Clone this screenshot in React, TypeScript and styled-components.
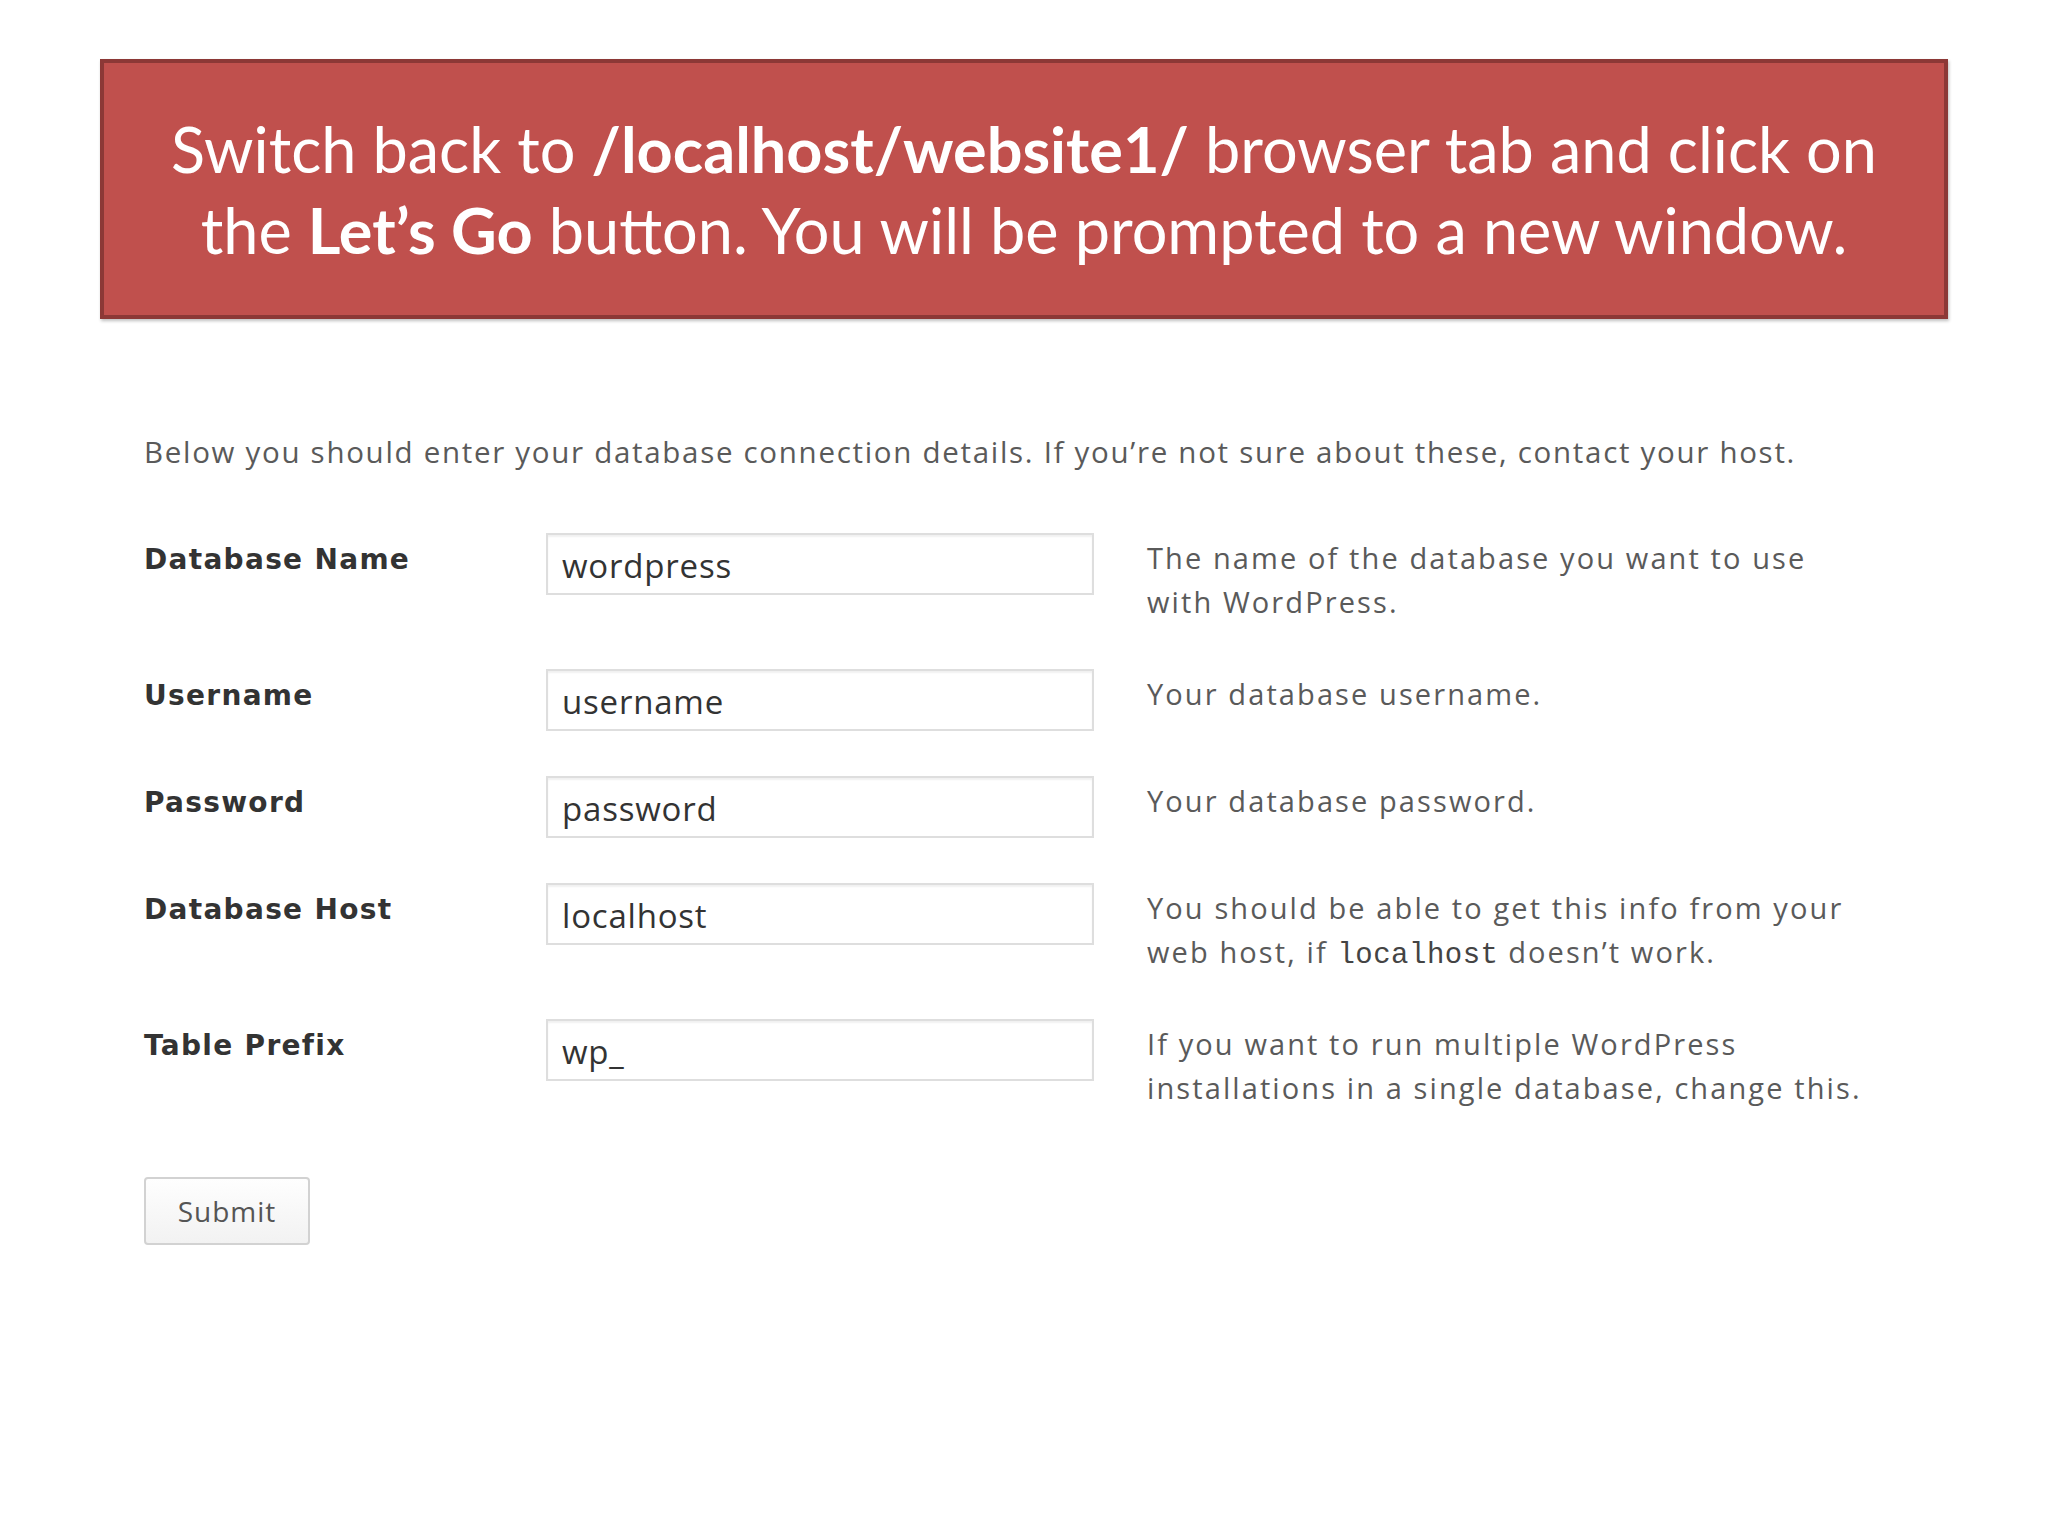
import React from "react";
import styled, { createGlobalStyle } from "styled-components";

const GlobalStyle = createGlobalStyle`
  html, body {
    margin: 0;
    padding: 0;
    background: #ffffff;
  }
  body {
    width: 2048px;
    height: 1536px;
    overflow: hidden;
  }
`;

const Page = styled.div`
  padding: 59px 0 0 100px;
  display: flex;
  flex-direction: column;
`;

const Banner = styled.div`
  width: 1848px;
  height: 260px;
  box-sizing: border-box;
  background: #c0504d;
  border: 4px solid #8c3836;
  box-shadow: 1px 2px 3px rgba(0, 0, 0, 0.25);
  display: flex;
  align-items: center;
  justify-content: center;
  text-align: center;
  color: #ffffff;
  font-family: Lato, "Open Sans", sans-serif;
  font-size: 63px;
  line-height: 81px;
`;

const Strong = styled.b`
  font-weight: 700;
`;

const Form = styled.div`
  margin: 113px 0 0 44px;
  display: flex;
  flex-direction: column;
  font-family: "Open Sans", sans-serif;
`;

const Intro = styled.p`
  margin: 0 0 61px;
  font-size: 29.5px;
  line-height: 40px;
  letter-spacing: 1.7px;
  color: #5a5a5a;
`;

const Row = styled.div`
  display: grid;
  grid-template-columns: 402px 548px 800px;
  padding-bottom: 45px;
`;

const Label = styled.div`
  padding-top: 5px;
  font-family: "DejaVu Sans", Verdana, sans-serif;
  font-weight: 700;
  font-size: 28px;
  line-height: 44px;
  letter-spacing: 1.3px;
  color: #333333;
`;

const Input = styled.div`
  box-sizing: border-box;
  height: 62px;
  padding: 4px 0 0 14px;
  border: 2px solid #dedede;
  box-shadow: inset 0 2px 2px rgba(0, 0, 0, 0.06);
  background: #ffffff;
  font-size: 33px;
  line-height: 54px;
  letter-spacing: 0.8px;
  color: #333333;
`;

const Help = styled.div`
  padding: 3px 0 0 53px;
  font-size: 29px;
  line-height: 44px;
  letter-spacing: 2.1px;
  color: #5a5a5a;
`;

const Code = styled.code`
  font-family: "Liberation Mono", "DejaVu Sans Mono", monospace;
  font-size: 29px;
  line-height: 1;
  letter-spacing: 0.5px;
  color: #444444;
`;

const Submit = styled.button`
  margin-top: 22px;
  width: 166px;
  height: 68px;
  border: 2px solid #d2d2d2;
  border-radius: 4px;
  background: linear-gradient(#fefefe, #f2f2f2);
  font-family: "Open Sans", sans-serif;
  font-size: 28px;
  letter-spacing: 1px;
  color: #555555;
  padding: 0;
`;

type Field = {
  label: string;
  value: string;
  help: React.ReactNode;
};

const fields: Field[] = [
  {
    label: "Database Name",
    value: "wordpress",
    help: (
      <>
        The name of the database you want to use
        <br />
        with WordPress.
      </>
    ),
  },
  { label: "Username", value: "username", help: "Your database username." },
  { label: "Password", value: "password", help: "Your database password." },
  {
    label: "Database Host",
    value: "localhost",
    help: (
      <>
        You should be able to get this info from your
        <br />
        web host, if <Code>localhost</Code> doesn’t work.
      </>
    ),
  },
  {
    label: "Table Prefix",
    value: "wp_",
    help: (
      <>
        If you want to run multiple WordPress
        <br />
        installations in a single database, change this.
      </>
    ),
  },
];

export default function App() {
  return (
    <>
      <GlobalStyle />
      <Page>
        <Banner>
          <div>
            Switch back to <Strong>/localhost/website1/</Strong> browser tab and click on
            <br />
            the <Strong>Let’s Go</Strong> button. You will be prompted to a new window.
          </div>
        </Banner>
        <Form>
          <Intro>
            Below you should enter your database connection details. If you’re not sure about
            these, contact your host.
          </Intro>
          {fields.map((f) => (
            <Row key={f.label}>
              <Label>{f.label}</Label>
              <Input>{f.value}</Input>
              <Help>{f.help}</Help>
            </Row>
          ))}
          <div>
            <Submit>Submit</Submit>
          </div>
        </Form>
      </Page>
    </>
  );
}
